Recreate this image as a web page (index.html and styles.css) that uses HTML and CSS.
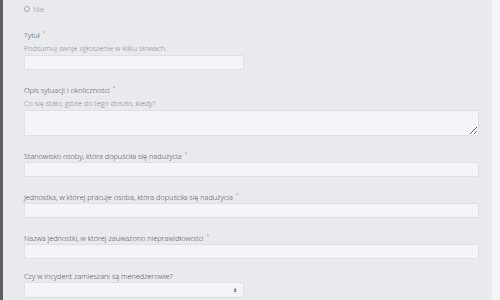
FILE: index.html
```html
<!DOCTYPE html>
<html lang="pl">
<head>
    <meta charset="UTF-8">
    <title>Zgłoszenie</title>
    <link rel="stylesheet" href="styles.css">
</head>
<body>
    <div class="page">
        <div class="rail"></div>
        <div class="panel">
            <div class="radio-row">
                <span class="radio"></span>
                <span>Nie</span>
            </div>

            <div class="field first">
                <div class="label">Tytuł <span class="req">*</span></div>
                <div class="help">Podsumuj swoje zgłoszenie w kilku słowach.</div>
                <input class="input short" type="text">
            </div>

            <div class="field">
                <div class="label">Opis sytuacji i okoliczności <span class="req">*</span></div>
                <div class="help">Co się stało, gdzie do tego doszło, kiedy?</div>
                <textarea class="input area"></textarea>
            </div>

            <div class="field">
                <div class="label">Stanowisko osoby, która dopuściła się nadużycia <span class="req">*</span></div>
                <input class="input" type="text">
            </div>

            <div class="field">
                <div class="label">Jednostka, w której pracuje osoba, która dopuściła się nadużycia <span class="req">*</span></div>
                <input class="input" type="text">
            </div>

            <div class="field">
                <div class="label">Nazwa jednostki, w której zauważono nieprawidłowości <span class="req">*</span></div>
                <input class="input" type="text">
            </div>

            <div class="field last">
                <div class="label">Czy w incydent zamieszani są menedżerowie?</div>
                <div class="input short select">
                    <span class="arrows">&#x2B0D;</span>
                </div>
            </div>
        </div>
        <div class="edge"></div>
    </div>
</body>
</html>
```

FILE: styles.css
```css
body {
    margin: 0;
    font-family: 'Open Sans', 'Noto Sans', sans-serif;
    font-size: 7.3px;
    font-weight: 300;
    color: #434448;
    background-color: #f5f6f8;
}
.page {
    display: flex;
    height: 300px;
    overflow: hidden;
}
.rail {
    width: 3px;
    background-color: #5c5d60;
}
.panel {
    flex: 1;
    background-color: #e9eaed;
    padding: 4px 13px 0 21px;
}
.edge {
    width: 8px;
    background-color: #f3f4f6;
}
.radio-row {
    display: flex;
    align-items: center;
    gap: 3px;
    height: 10px;
    color: #8a8b8f;
}
.radio {
    width: 4px;
    height: 4px;
    border: 0.7px solid #a4a5a9;
    border-radius: 50%;
}
.field {
    margin-top: 15px;
}
.field.first {
    margin-top: 16px;
}
.field.last {
    margin-top: 12px;
}
.label {
    height: 10px;
    line-height: 10px;
    margin-bottom: 1px;
}
.req {
    color: #d0453c;
    font-size: 5px;
    line-height: 0;
    position: relative;
    top: -3px;
    margin-left: 1px;
}
.help {
    line-height: 10px;
    color: #7f8084;
    margin-top: 3px;
    margin-bottom: 2px;
}
.input {
    display: block;
    box-sizing: border-box;
    width: 100%;
    height: 15px;
    margin: 0;
    padding: 0 4px;
    background-color: #f4f5f9;
    border: 1px solid #dfe0e5;
    border-radius: 1px;
    font: inherit;
}
.short {
    width: 220px;
}
.area {
    height: 26px;
    resize: vertical;
}
.select {
    display: flex;
    align-items: center;
    justify-content: flex-end;
    height: 16px;
    padding-right: 6px;
}
.arrows {
    font-size: 5px;
    line-height: 1;
    color: #555;
}
```
